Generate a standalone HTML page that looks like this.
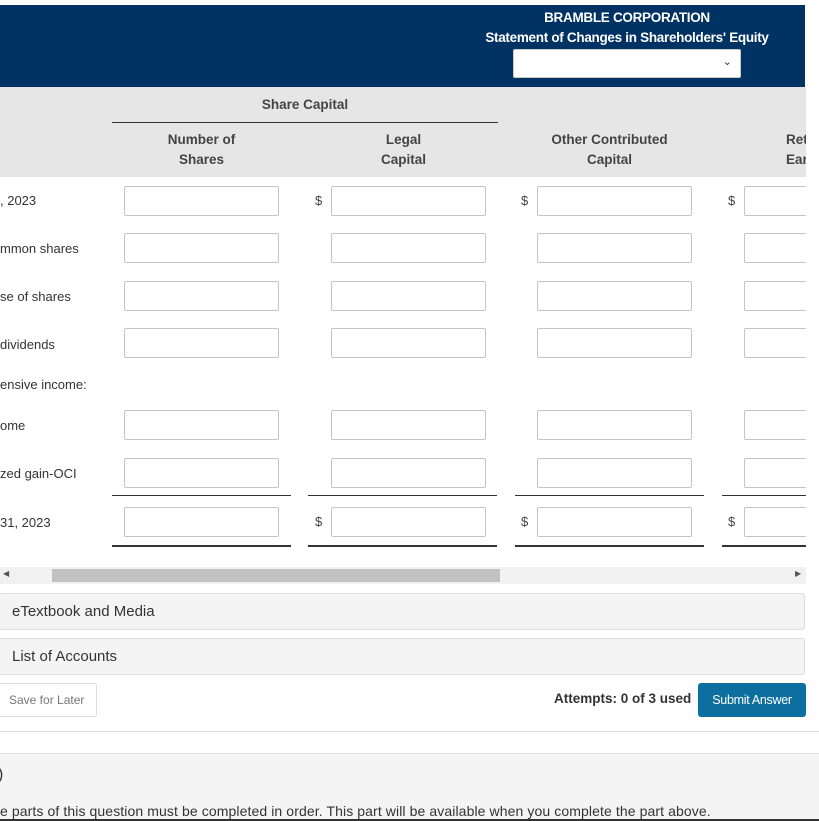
<!DOCTYPE html>
<html><head><style>
*{box-sizing:border-box;margin:0;padding:0}
body{width:819px;height:821px;overflow:hidden;background:#fff;font-family:"Liberation Sans",sans-serif;color:#333;position:relative}
.a{position:absolute}
.in{position:absolute;height:30px;border:1px solid #c4c4c4;background:#fff;border-radius:2px}
.lbl{position:absolute;font-size:13px;color:#333}
.hd{position:absolute;font-size:13.5px;font-weight:bold;color:#444;text-align:center;line-height:20px}
.d{position:absolute;font-size:13px;color:#444}
.ln{position:absolute;height:1px;background:#333}
</style></head><body>
<div class="a" style="left:0;top:5px;width:805px;height:82px;background:#003263"></div>
<div class="a" style="left:470px;top:8px;width:314px;text-align:center;color:#fff;font-weight:bold;font-size:13.5px;line-height:20px;letter-spacing:-0.3px">BRAMBLE CORPORATION<br>Statement of Changes in Shareholders' Equity</div>
<div class="a" style="left:513px;top:49px;width:228px;height:29px;background:#fff;border:1px solid #ccc;border-radius:2px"><span class="a" style="right:8px;top:5px;font-size:11px;color:#333">&#8964;</span></div>
<div class="a" style="left:0;top:87px;width:806px;height:90px;background:#e6e6e6"></div>
<div class="hd" style="left:112px;top:95px;width:386px">Share Capital</div>
<div class="ln" style="left:112px;top:122px;width:386px"></div>
<div class="hd" style="left:124px;top:130px;width:155px">Number of<br>Shares</div>
<div class="hd" style="left:331px;top:130px;width:145px">Legal<br>Capital</div>
<div class="hd" style="left:537px;top:130px;width:145px">Other Contributed<br>Capital</div>
<div class="hd" style="left:786px;top:130px;width:40px;text-align:left">Ret<br>Ear</div>

<div class="lbl" style="left:0;top:193px">, 2023</div>
<div class="lbl" style="left:0;top:241px">mmon shares</div>
<div class="lbl" style="left:0;top:289px">se of shares</div>
<div class="lbl" style="left:0;top:337px">dividends</div>
<div class="lbl" style="left:0;top:377px">ensive income:</div>
<div class="lbl" style="left:0;top:418px">ome</div>
<div class="lbl" style="left:0;top:466px">zed gain-OCI</div>
<div class="lbl" style="left:0;top:515px">31, 2023</div>

<div id="rows"></div>
<script>
var ys=[186,233,281,328,410,458,507],xs=[124,331,537,744];
var h='';
ys.forEach(function(y,i){xs.forEach(function(x,j){
 var w=j==3?80:155;
 h+='<div class="in" style="left:'+x+'px;top:'+y+'px;width:'+w+'px"></div>';
 if((i==0||i==6)&&j>0)h+='<div class="d" style="left:'+(x-16)+'px;top:'+(y+7)+'px">$</div>';
});});
document.getElementById('rows').innerHTML=h;
</script>
<div class="a" style="left:806px;top:87px;width:13px;height:480px;background:#fff"></div>
<div class="ln" style="left:112px;top:495px;width:179px"></div>
<div class="ln" style="left:308px;top:495px;width:189px"></div>
<div class="ln" style="left:515px;top:495px;width:189px"></div>
<div class="ln" style="left:722px;top:495px;width:84px"></div>
<div class="ln" style="left:112px;top:545px;width:179px;height:2px"></div>
<div class="ln" style="left:308px;top:545px;width:189px;height:2px"></div>
<div class="ln" style="left:515px;top:545px;width:189px;height:2px"></div>
<div class="ln" style="left:722px;top:545px;width:84px;height:2px"></div>

<div class="a" style="left:0;top:567px;width:806px;height:17px;background:#f1f1f1"></div>
<div class="a" style="left:52px;top:569px;width:448px;height:13px;background:#c1c1c1"></div>
<div class="a" style="left:3px;top:569px;font-size:8px;color:#555">&#9664;</div>
<div class="a" style="left:795px;top:569px;font-size:8px;color:#555">&#9654;</div>

<div class="a" style="left:-2px;top:593px;width:807px;height:37px;background:#f4f4f4;border:1px solid #ddd;border-radius:3px;font-size:15px;color:#333;padding:9px 13px">eTextbook and Media</div>
<div class="a" style="left:-2px;top:638px;width:807px;height:37px;background:#f4f4f4;border:1px solid #ddd;border-radius:3px;font-size:15px;color:#333;padding:9px 13px">List of Accounts</div>
<div class="a" style="left:-2px;top:683px;width:99px;height:34px;background:#fff;border:1px solid #ddd;border-radius:3px;font-size:12px;color:#777;padding:9px 10px">Save for Later</div>
<div class="a" style="left:554px;top:691px;font-size:13.5px;font-weight:bold;color:#333">Attempts: 0 of 3 used</div>
<div class="a" style="left:698px;top:683px;width:108px;height:34px;background:#0d6fa0;border-radius:3px;font-size:12.5px;color:#fff;text-align:center;line-height:34px;letter-spacing:-0.3px">Submit Answer</div>
<div class="a" style="left:0;top:731px;width:819px;height:1px;background:#ddd"></div>
<div class="a" style="left:0;top:753px;width:819px;height:68px;background:#f4f4f4;border-top:1px solid #ddd"></div>
<div class="a" style="left:-2px;top:766px;font-size:16px;color:#333">)</div>
<div class="a" style="left:0;top:803px;font-size:14px;color:#333;white-space:nowrap;letter-spacing:0.1px">e parts of this question must be completed in order. This part will be available when you complete the part above.</div>
<div class="a" style="left:0;top:819px;width:819px;height:2px;background:#333"></div>
</body></html>
